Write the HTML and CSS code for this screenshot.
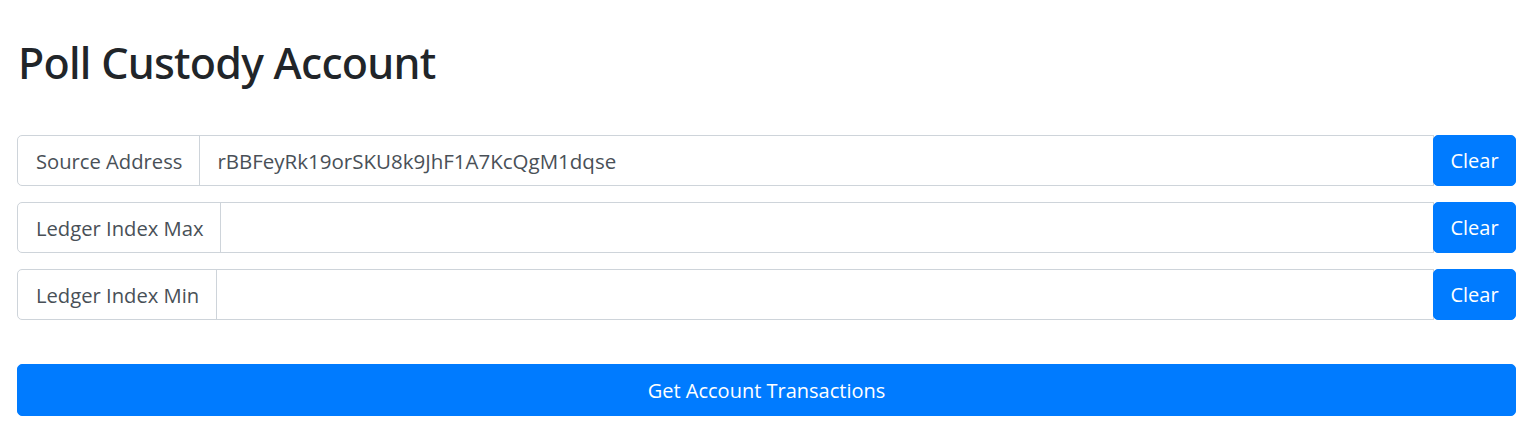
FILE: index.html
```html
<!DOCTYPE html>
<html lang="en">
<head>
<meta charset="utf-8">
<title>Poll Custody Account</title>
<link rel="stylesheet" href="styles.css">
</head>
<body>
<main class="page">
  <h1 class="title">Poll Custody Account</h1>
  <form class="form">
    <div class="group">
      <span class="label">Source Address</span>
      <input class="field" type="text" value="rBBFeyRk19orSKU8k9JhF1A7KcQgM1dqse">
      <button type="button" class="btn btn-clear">Clear</button>
    </div>
    <div class="group">
      <span class="label">Ledger Index Max</span>
      <input class="field" type="text" value="">
      <button type="button" class="btn btn-clear">Clear</button>
    </div>
    <div class="group">
      <span class="label">Ledger Index Min</span>
      <input class="field" type="text" value="">
      <button type="button" class="btn btn-clear">Clear</button>
    </div>
    <button type="button" class="btn btn-block">Get Account Transactions</button>
  </form>
</main>
</body>
</html>
```
FILE: styles.css
```css
* { box-sizing: border-box; }
html, body { margin: 0; padding: 0; background: #fff; }
body {
  font-family: "Open Sans", "Noto Sans", "Liberation Sans", sans-serif;
  color: #212529;
}
.page {
  padding: 33px 23px 0 17px;
}
.title {
  margin: 0 0 0 1px;
  font-family: "Noto Sans", "Open Sans", sans-serif;
  font-size: 43px;
  font-weight: 500;
  line-height: 60px;
  color: #212529;
  letter-spacing: -0.75px;
}
.form {
  margin-top: 42px;
  display: flex;
  flex-direction: column;
}
.group {
  display: flex;
  height: 51px;
  margin-bottom: 16px;
}
.label {
  display: flex;
  align-items: center;
  padding: 0 17px 0 18px;
  font-size: 20.2px;
  color: #495057;
  background: #fff;
  border: 1px solid #ced4da;
  border-radius: 5px 0 0 5px;
  white-space: nowrap;
}
.field {
  flex: 1;
  min-width: 0;
  margin-left: -1px;
  padding: 0 17px;
  font-family: inherit;
  font-size: 20.5px;
  color: #495057;
  border: 1px solid #ced4da;
  border-radius: 0;
  outline: none;
  background: #fff;
}
.btn {
  font-family: inherit;
  font-size: 20px;
  color: #fff;
  background: #007bff;
  border: 1px solid #007bff;
  border-radius: 5px;
  cursor: pointer;
}
.btn-clear {
  width: 83px;
  margin-left: -1px;
  padding: 0;
}
.btn-block {
  margin-top: 28px;
  height: 52px;
  width: 100%;
}
```
